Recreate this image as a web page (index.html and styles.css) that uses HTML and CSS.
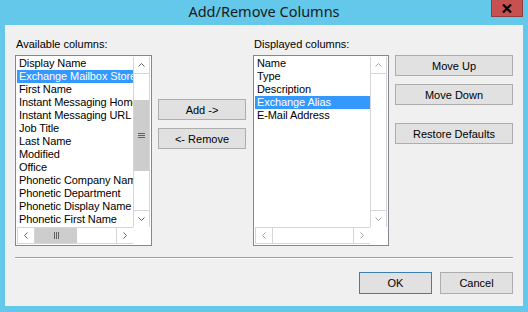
FILE: index.html
```html
<!DOCTYPE html>
<html lang="en">
<head>
<meta charset="UTF-8">
<title>Add/Remove Columns</title>
<link rel="stylesheet" href="styles.css">
</head>
<body>

<div class="window">
  <div class="titlebar">
    <span></span>
    <span class="title">Add/Remove Columns</span>
    <button class="close" type="button">
      <svg width="10" height="9" viewBox="0 0 10 9"><path d="M1 0.5 L9 8.5 M9 0.5 L1 8.5" stroke="#000" stroke-width="2.2" fill="none"/></svg>
    </button>
  </div>

  <div class="client">
    <div class="columns">
      <div class="col-list">
        <div class="label">Available columns:</div>
        <div class="listbox">
          <ul class="items">
            <li>Display Name</li>
            <li class="selected">Exchange Mailbox Store</li>
            <li>First Name</li>
            <li>Instant Messaging Home Page</li>
            <li>Instant Messaging URL</li>
            <li>Job Title</li>
            <li>Last Name</li>
            <li>Modified</li>
            <li>Office</li>
            <li>Phonetic Company Name</li>
            <li>Phonetic Department</li>
            <li>Phonetic Display Name</li>
            <li>Phonetic First Name</li>
          </ul>
          <div class="vscroll">
            <div class="arrow arrow-up"><svg width="7" height="4"><polyline points="0.5,3.5 3.5,0.5 6.5,3.5"/></svg></div>
            <div class="track">
              <div class="vthumb"><span></span><span></span><span></span></div>
            </div>
            <div class="arrow arrow-down"><svg width="7" height="4"><polyline points="0.5,0.5 3.5,3.5 6.5,0.5"/></svg></div>
          </div>
          <div class="hscroll">
            <div class="arrow arrow-left"><svg width="4" height="7"><polyline points="3.5,0.5 0.5,3.5 3.5,6.5"/></svg></div>
            <div class="track">
              <div class="hthumb"><span></span><span></span><span></span></div>
            </div>
            <div class="arrow arrow-right"><svg width="4" height="7"><polyline points="0.5,0.5 3.5,3.5 0.5,6.5"/></svg></div>
          </div>
          <div class="corner"></div>
        </div>
      </div>

      <div class="col-mid">
        <button class="btn" type="button">Add -&gt;</button>
        <button class="btn" type="button">&lt;- Remove</button>
      </div>

      <div class="col-list col-list-right">
        <div class="label">Displayed columns:</div>
        <div class="listbox disabled-scroll">
          <ul class="items">
            <li>Name</li>
            <li>Type</li>
            <li>Description</li>
            <li class="selected">Exchange Alias</li>
            <li>E-Mail Address</li>
          </ul>
          <div class="vscroll">
            <div class="arrow arrow-up"><svg width="7" height="4"><polyline points="0.5,3.5 3.5,0.5 6.5,3.5"/></svg></div>
            <div class="track"></div>
            <div class="arrow arrow-down"><svg width="7" height="4"><polyline points="0.5,0.5 3.5,3.5 6.5,0.5"/></svg></div>
          </div>
          <div class="hscroll">
            <div class="arrow arrow-left"><svg width="4" height="7"><polyline points="3.5,0.5 0.5,3.5 3.5,6.5"/></svg></div>
            <div class="track"></div>
            <div class="arrow arrow-right"><svg width="4" height="7"><polyline points="0.5,0.5 3.5,3.5 0.5,6.5"/></svg></div>
          </div>
          <div class="corner"></div>
        </div>
      </div>

      <div class="col-right">
        <button class="btn" type="button">Move Up</button>
        <button class="btn" type="button">Move Down</button>
        <button class="btn btn-restore" type="button">Restore Defaults</button>
      </div>
    </div>

    <div class="separator"></div>

    <div class="footer">
      <button class="btn btn-footer btn-default" type="button">OK</button>
      <button class="btn btn-footer" type="button">Cancel</button>
    </div>
  </div>
</div>

</body>
</html>
```

FILE: styles.css
```css
body {
  margin: 0;
  font-family: "Liberation Sans", Arial, sans-serif;
  font-size: 11px;
  color: #000;
}

.window {
  width: 528px;
  height: 312px;
  background-color: #63c8e9;
  overflow: hidden;
}

.titlebar {
  height: 25px;
  display: grid;
  grid-template-columns: 1fr auto 1fr;
  align-items: start;
}

.title {
  font-family: "Noto Sans", sans-serif;
  font-size: 14.5px;
  line-height: 22px;
  color: #1a1a1a;
}

.close {
  justify-self: end;
  width: 32px;
  height: 17px;
  margin-right: 5px;
  padding: 0;
  border: 1px solid #8e3b3b;
  border-top: none;
  background-color: #c75050;
  display: flex;
  align-items: center;
  justify-content: center;
}

.client {
  margin: 0 5px;
  height: 281px;
  background-color: #f0f0f0;
}

.columns {
  display: flex;
  padding: 13px 10px 0;
}

.col-list {
  width: 137px;
}

.col-list-right {
  width: 136px;
  margin-left: 7px;
}

.label {
  height: 13px;
  line-height: 13px;
  padding-left: 1px;
  margin-bottom: 4px;
}

.listbox {
  box-sizing: border-box;
  height: 191px;
  border: 1px solid #828790;
  padding: 1px;
  background-color: #fff;
  display: grid;
  grid-template-columns: 1fr 17px;
  grid-template-rows: 1fr 17px;
}

.items {
  list-style: none;
  margin: 0;
  padding: 0;
  overflow: hidden;
}

.items li {
  height: 13px;
  line-height: 13px;
  padding-left: 2px;
  white-space: nowrap;
  letter-spacing: -0.1px;
}

.items .selected {
  background-color: #3399ff;
  color: #fff;
}

.vscroll {
  display: flex;
  flex-direction: column;
  border-left: 1px solid #d6d6d6;
  border-right: 1px solid #d6d6d6;
}

.hscroll {
  display: flex;
  border-top: 1px solid #d6d6d6;
  border-bottom: 1px solid #d6d6d6;
  border-left: 1px solid #d6d6d6;
}

.arrow {
  flex: none;
  display: flex;
  align-items: center;
  justify-content: center;
  color: #606060;
}

.arrow polyline {
  fill: none;
  stroke: currentColor;
  stroke-width: 1;
}

.vscroll .arrow {
  height: 16px;
}

.arrow-up {
  border-bottom: 1px solid #d6d6d6;
}

.arrow-down {
  border-top: 1px solid #d6d6d6;
}

.hscroll .arrow {
  width: 16px;
}

.arrow-left {
  border-right: 1px solid #d6d6d6;
}

.arrow-right {
  border-left: 1px solid #d6d6d6;
}

.track {
  flex: 1;
  display: flex;
}

.vscroll .track {
  flex-direction: column;
}

.vthumb {
  margin-top: 26px;
  height: 71px;
  background-color: #cdcdcd;
  display: flex;
  flex-direction: column;
  align-items: center;
  justify-content: center;
  gap: 1px;
}

.vthumb span {
  width: 7px;
  height: 1px;
  background-color: #606060;
}

.hthumb {
  width: 42px;
  background-color: #cdcdcd;
  display: flex;
  align-items: center;
  justify-content: center;
  gap: 1px;
}

.hthumb span {
  width: 1px;
  height: 7px;
  background-color: #606060;
}

.corner {
  background-color: #fff;
}

.disabled-scroll .arrow {
  color: #a8a8a8;
}

.col-mid {
  width: 88px;
  margin-left: 6px;
  padding-top: 61px;
  display: flex;
  flex-direction: column;
  gap: 8px;
}

.col-right {
  width: 118px;
  margin-left: 6px;
  padding-top: 17px;
  display: flex;
  flex-direction: column;
  gap: 8px;
}

.btn {
  box-sizing: border-box;
  height: 21px;
  padding: 0;
  border: 1px solid #adadad;
  background-color: #e1e1e1;
  font-family: "Liberation Sans", Arial, sans-serif;
  font-size: 11px;
  color: #000;
}

.btn-restore {
  margin-top: 10px;
}

.separator {
  margin: 11px 10px 0;
  height: 1px;
  border-top: 1px solid #a0a0a0;
  background-color: #fff;
}

.footer {
  display: flex;
  justify-content: flex-end;
  gap: 8px;
  margin-top: 13px;
  padding-right: 10px;
}

.btn-footer {
  width: 73px;
  height: 22px;
}

.btn-default {
  border-color: #3c7fb1;
}
```
